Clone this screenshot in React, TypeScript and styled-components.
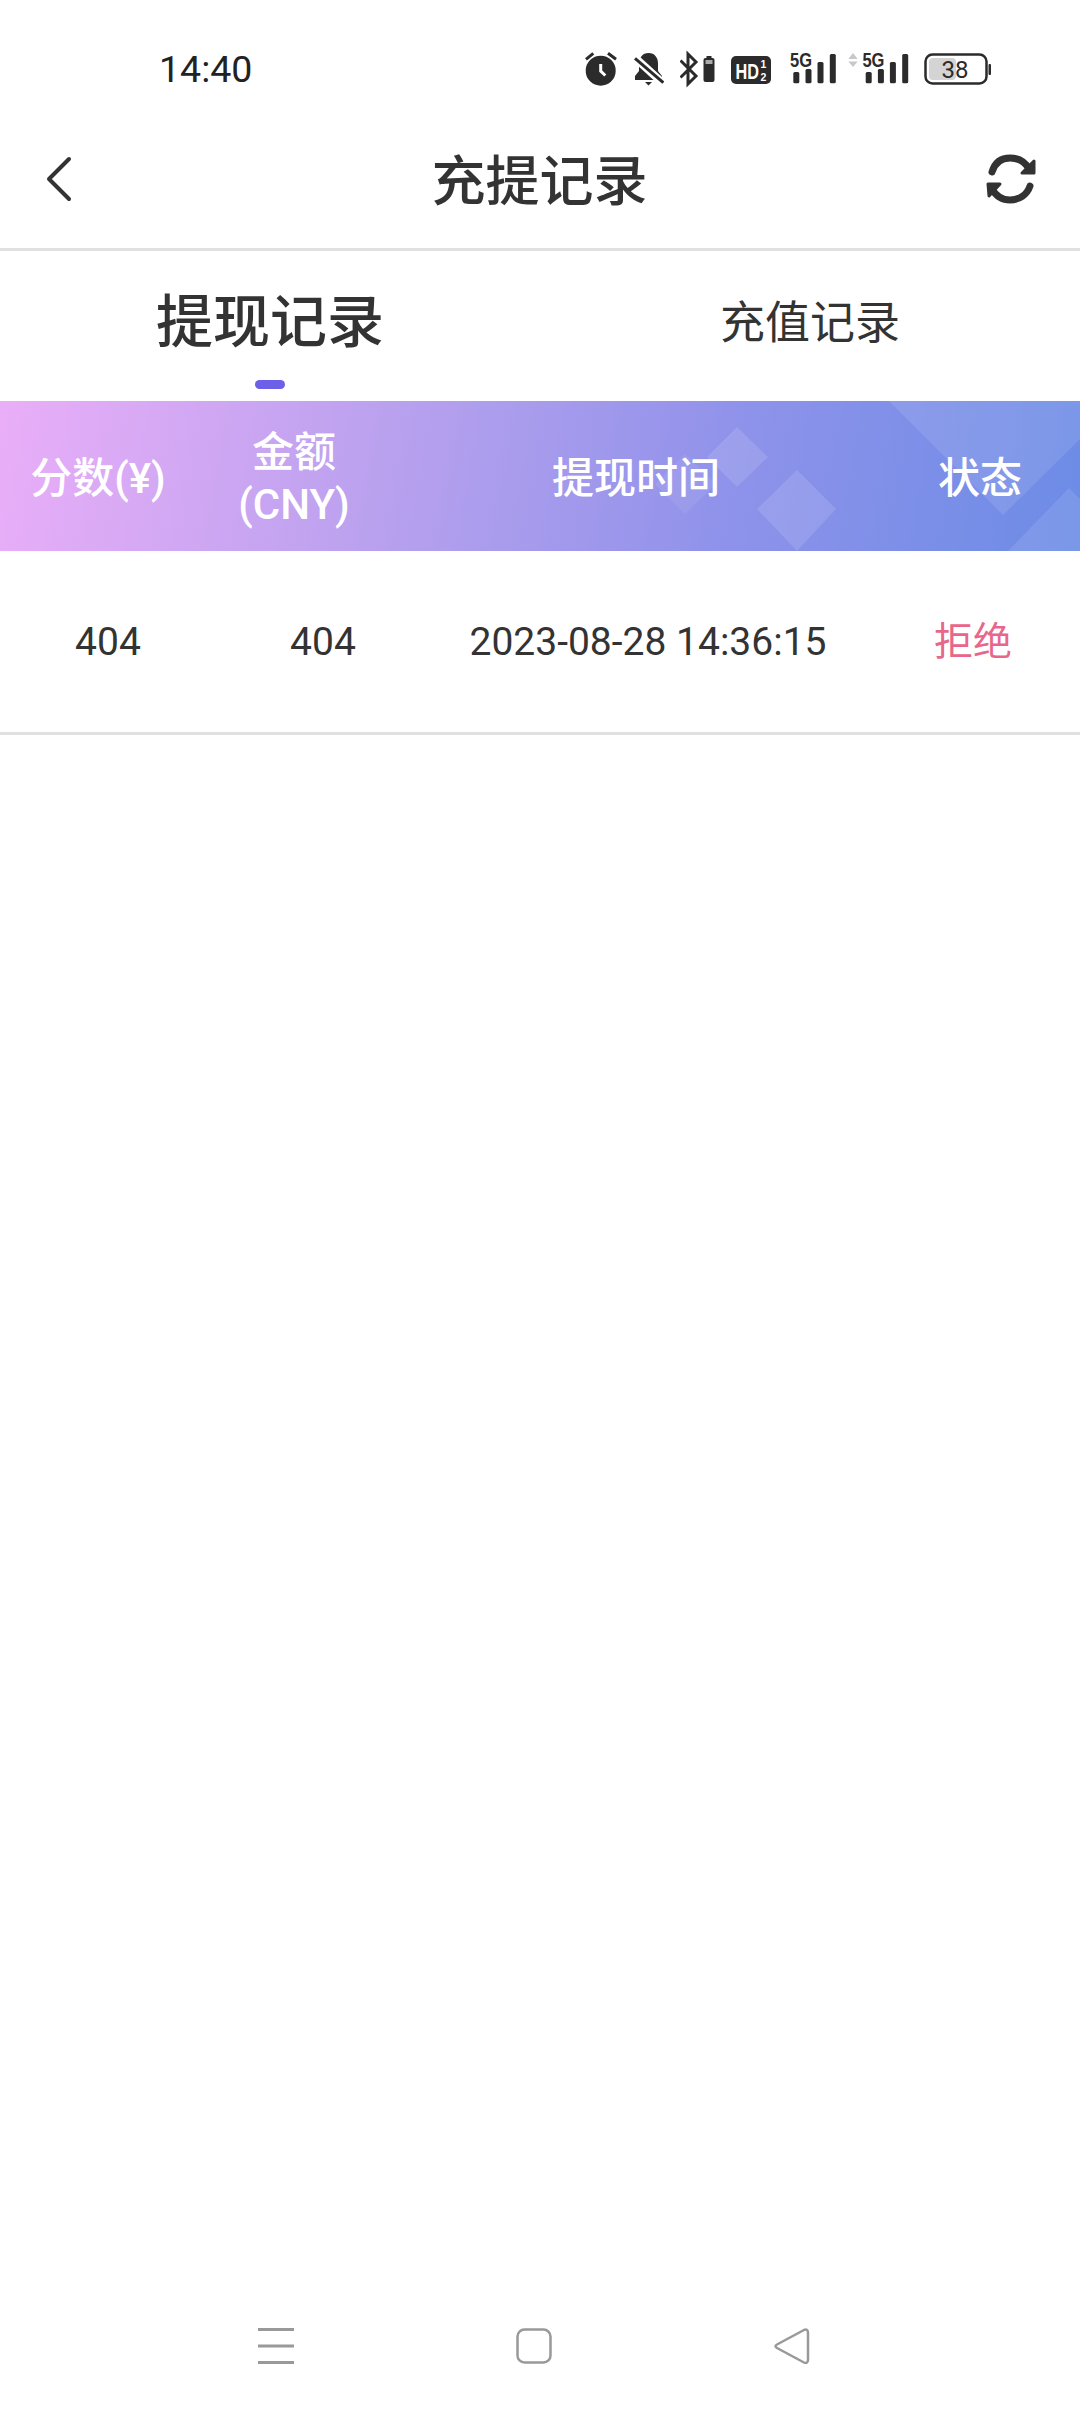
import React from 'react';
import styled, { createGlobalStyle } from 'styled-components';

const GlobalStyle = createGlobalStyle`
  html, body {
    margin: 0;
    padding: 0;
    background: #fff;
  }
  * {
    box-sizing: border-box;
  }
`;

const FONT = `Roboto, "Noto Sans CJK SC", sans-serif`;

const Page = styled.div`
  width: 1080px;
  height: 2412px;
  display: flex;
  flex-direction: column;
  background: #fff;
  color: #333;
  font-family: ${FONT};
  overflow: hidden;
`;

const StatusBar = styled.div`
  height: 90px;
  padding: 48px 0 0 159px;
  display: flex;
  justify-content: space-between;
`;

const Clock = styled.div`
  font-size: 37.500px;
  line-height: 42px;
  color: #222;
`;

const StatusIcons = styled.div`
  width: 495px;
  height: 42px;
  display: flex;
  gap: 16px;
  svg {
    display: block;
    flex: none;
    height: 42px;
    color: #2b2b2b;
  }
`;

const NavBar = styled.header`
  height: 161px;
  padding: 20px 43px 0 44px;
  display: flex;
  align-items: center;
  justify-content: space-between;
  border-bottom: 3px solid #e0e0e0;
`;

const IconButton = styled.button`
  padding: 0;
  border: 0;
  background: none;
  display: flex;
  color: #333;
`;

const PageTitle = styled.h1`
  margin: 8px 0 0 20px;
  font-size: 54px;
  line-height: 64px;
  font-weight: 500;
  color: #333;
`;

const Tabs = styled.nav`
  height: 150px;
  display: flex;
`;

const Tab = styled.div<{ $active?: boolean }>`
  position: relative;
  width: 540px;
  padding-top: ${(p) => (p.$active ? '40px' : '47px')};
  text-align: center;
  font-size: ${(p) => (p.$active ? '57px' : '45px')};
  line-height: ${(p) => (p.$active ? '64px' : '52px')};
  font-weight: ${(p) => (p.$active ? 500 : 400)};
`;

const TabIndicator = styled.span`
  position: absolute;
  left: 255px;
  top: 129px;
  width: 30px;
  height: 9px;
  border-radius: 5px;
  background: #6c5fe8;
`;

const TableHead = styled.div`
  position: relative;
  height: 150px;
  padding-top: 5px;
  display: grid;
  grid-template-columns: 196px 196px 488px 200px;
  align-items: center;
  background: linear-gradient(100deg, #eaaef8 0%, #b6a0ee 38%, #8e92ea 68%, #6c8ce6 100%);
  overflow: hidden;
`;

const HeadDecor = styled.svg`
  position: absolute;
  left: 0;
  top: 0;
`;

const HeadCell = styled.div`
  position: relative;
  text-align: center;
  font-size: 42px;
  line-height: 52px;
  font-weight: 500;
  color: #fff;
`;

const TableRow = styled.div`
  height: 184px;
  display: grid;
  grid-template-columns: 216px 214px 436px 214px;
  align-items: center;
  border-bottom: 3px solid #e0e0e0;
`;

const RowCell = styled.div<{ $danger?: boolean }>`
  text-align: center;
  font-size: 39px;
  line-height: 46px;
  color: ${(p) => (p.$danger ? '#e8668a' : '#333')};
`;

const Spacer = styled.div`
  flex: 1;
`;

const SystemNav = styled.footer`
  height: 36px;
  margin-bottom: 48px;
  padding-left: 258px;
  display: flex;
  gap: 222px;
  svg {
    display: block;
    color: #999;
  }
`;

const AlarmIcon = () => (
  <svg width="33" viewBox="0 0 33 42">
    <circle cx="15.700" cy="22.700" r="15" fill="currentColor" />
    <path d="M1 11.300 8.300 5.300M23 5.300l8 6" stroke="currentColor" strokeWidth="3" fill="none" />
    <path d="M15.700 16v7l4.600 4.500" stroke="#fff" strokeWidth="3" fill="none" />
  </svg>
);

const BellOffIcon = () => (
  <svg width="30" viewBox="0 0 30 42">
    <path d="M14.500 5c-6 0-9.500 5-9.500 10v8l-4 5v4h27v-4l-4-5v-8c0-5-3-10-9.500-10z" fill="currentColor" />
    <path d="M11 34h7l-3.500 3.500z" fill="currentColor" />
    <path d="M-1 8 31 37" stroke="#fff" strokeWidth="8" />
    <path d="M1 10.300 29.300 34.700" stroke="currentColor" strokeWidth="3" />
  </svg>
);

const BluetoothBatteryIcon = () => (
  <svg width="35" viewBox="0 0 35 42">
    <path d="M0.500 12.500 16 28l-8 8V6l8 8L0.500 29.500" stroke="currentColor" strokeWidth="3" fill="none" />
    <rect x="26.500" y="8" width="5" height="3" fill="currentColor" />
    <rect x="23.500" y="10" width="11" height="24" rx="2" fill="currentColor" />
    <rect x="25.500" y="12" width="7" height="4" fill="#aaa" />
  </svg>
);

const HdIcon = () => (
  <svg width="43" viewBox="0 0 43 42">
    <rect x="0" y="8" width="40" height="28" rx="5" fill="currentColor" />
    <text transform="translate(4.500 31) scale(0.74 1)" fontFamily="Liberation Sans" fontWeight="700" fontSize="22" fill="#fff">HD</text>
    <text x="29.500" y="20" fontFamily="Liberation Sans" fontWeight="700" fontSize="10.500" fill="#fff">1</text>
    <text x="29.500" y="33" fontFamily="Liberation Sans" fontWeight="700" fontSize="10.500" fill="#fff">2</text>
  </svg>
);

const SignalIcon = ({ arrows }: { arrows?: boolean }) => {
  const dx = arrows ? 14.4 : 0;
  return (
    <svg width={arrows ? 60 : 42} viewBox={`0 0 ${arrows ? 60 : 42} 42`} style={{ overflow: 'visible' }}>
      {arrows && <path d="M0.300 11 5 5l4.700 6zM0.300 13.500 5 19l4.700-5.500z" fill="#c8c8c8" />}
      <text x={dx} y="18.800" fontFamily="Liberation Sans" fontWeight="700" fontSize="19.500" fill="currentColor" textLength="22" lengthAdjust="spacingAndGlyphs">5G</text>
      <rect x={dx + 3.3} y="24" width="6" height="11.300" rx="1.500" fill="currentColor" />
      <rect x={dx + 15.5} y="21" width="6" height="14.300" rx="1.500" fill="currentColor" />
      <rect x={dx + 27.5} y="14" width="6" height="21.300" rx="1.500" fill="currentColor" />
      <rect x={dx + 39.8} y="6" width="6" height="29.300" rx="1.500" fill="currentColor" />
    </svg>
  );
};

const BatteryIcon = () => (
  <svg width="68" viewBox="0 0 68 42">
    <rect x="1.500" y="6.500" width="61" height="29" rx="7" fill="none" stroke="currentColor" strokeWidth="2.500" />
    <rect x="5" y="10" width="27" height="22" rx="4" fill="#d4d4d4" />
    <text x="31" y="30" textAnchor="middle" fontFamily="Roboto" fontSize="24" fill="currentColor">38</text>
    <rect x="64.500" y="16" width="2.500" height="11" rx="1" fill="currentColor" />
  </svg>
);

const Decor = () => (
  <HeadDecor width="1080" height="150" viewBox="0 0 1080 150">
    <path d="M889 0 1003 114 1080 38V0z" fill="#fff" fillOpacity="0.1" />
    <path d="M1008 150 1069 87 1080 98V150z" fill="#fff" fillOpacity="0.1" />
    <path d="M737 26 768 56 737 86 707 56z" fill="#fff" fillOpacity="0.12" />
    <path d="M685 53 716 83 685 113 655 83z" fill="#fff" fillOpacity="0.07" />
    <path d="M797 69 836 108 797 150 757 108z" fill="#fff" fillOpacity="0.12" />
  </HeadDecor>
);

export default function App() {
  return (
    <Page>
      <GlobalStyle />
      <StatusBar>
        <Clock>14:40</Clock>
        <StatusIcons>
          <AlarmIcon />
          <BellOffIcon />
          <BluetoothBatteryIcon />
          <HdIcon />
          <SignalIcon />
          <SignalIcon arrows />
          <BatteryIcon />
        </StatusIcons>
      </StatusBar>

      <NavBar>
        <IconButton>
          <svg width="30" height="46" viewBox="0 0 30 46" fill="none" stroke="currentColor" strokeWidth="4" strokeLinecap="round" strokeLinejoin="round">
            <path d="M25 3 5 23l20 20" />
          </svg>
        </IconButton>
        <PageTitle>充提记录</PageTitle>
        <IconButton>
          <svg width="52" height="52" viewBox="0 0 52 52">
            <g fill="none" stroke="currentColor" strokeWidth="7" strokeLinecap="round">
              <path d="M7 19C10 9 17 5 25 5c8 0 15 4 19 11" />
              <path d="M45 33c-3 9-11 14-20 14-8 0-14-4-18-11" />
            </g>
            <path d="M49 8v12H37zM3 31h12L4 43z" fill="currentColor" stroke="currentColor" strokeWidth="3" strokeLinejoin="round" />
          </svg>
        </IconButton>
      </NavBar>

      <Tabs>
        <Tab $active>
          提现记录
          <TabIndicator />
        </Tab>
        <Tab>充值记录</Tab>
      </Tabs>

      <TableHead>
        <Decor />
        <HeadCell>分数(¥)</HeadCell>
        <HeadCell>金额<br />(CNY)</HeadCell>
        <HeadCell>提现时间</HeadCell>
        <HeadCell>状态</HeadCell>
      </TableHead>

      <TableRow>
        <RowCell>404</RowCell>
        <RowCell>404</RowCell>
        <RowCell>2023-08-28 14:36:15</RowCell>
        <RowCell $danger>拒绝</RowCell>
      </TableRow>

      <Spacer />

      <SystemNav>
        <svg width="36" height="36" viewBox="0 0 36 36" fill="currentColor">
          <rect x="0" y="0" width="36" height="3" />
          <rect x="0" y="16.500" width="36" height="3" />
          <rect x="0" y="33" width="36" height="3" />
        </svg>
        <svg width="36" height="36" viewBox="0 0 36 36" fill="none" stroke="currentColor" strokeWidth="2.500">
          <rect x="1.500" y="1.500" width="33" height="33" rx="7" />
        </svg>
        <svg width="36" height="36" viewBox="0 0 36 36" fill="none" stroke="currentColor" strokeWidth="2.500" strokeLinejoin="round">
          <path d="M34 4.500c0-2.500-2-3.500-4-2.500L3 16.500c-2 1-2 2.500 0 3.500l27 14.500c2 1 4 0 4-2.500z" />
        </svg>
      </SystemNav>
    </Page>
  );
}
